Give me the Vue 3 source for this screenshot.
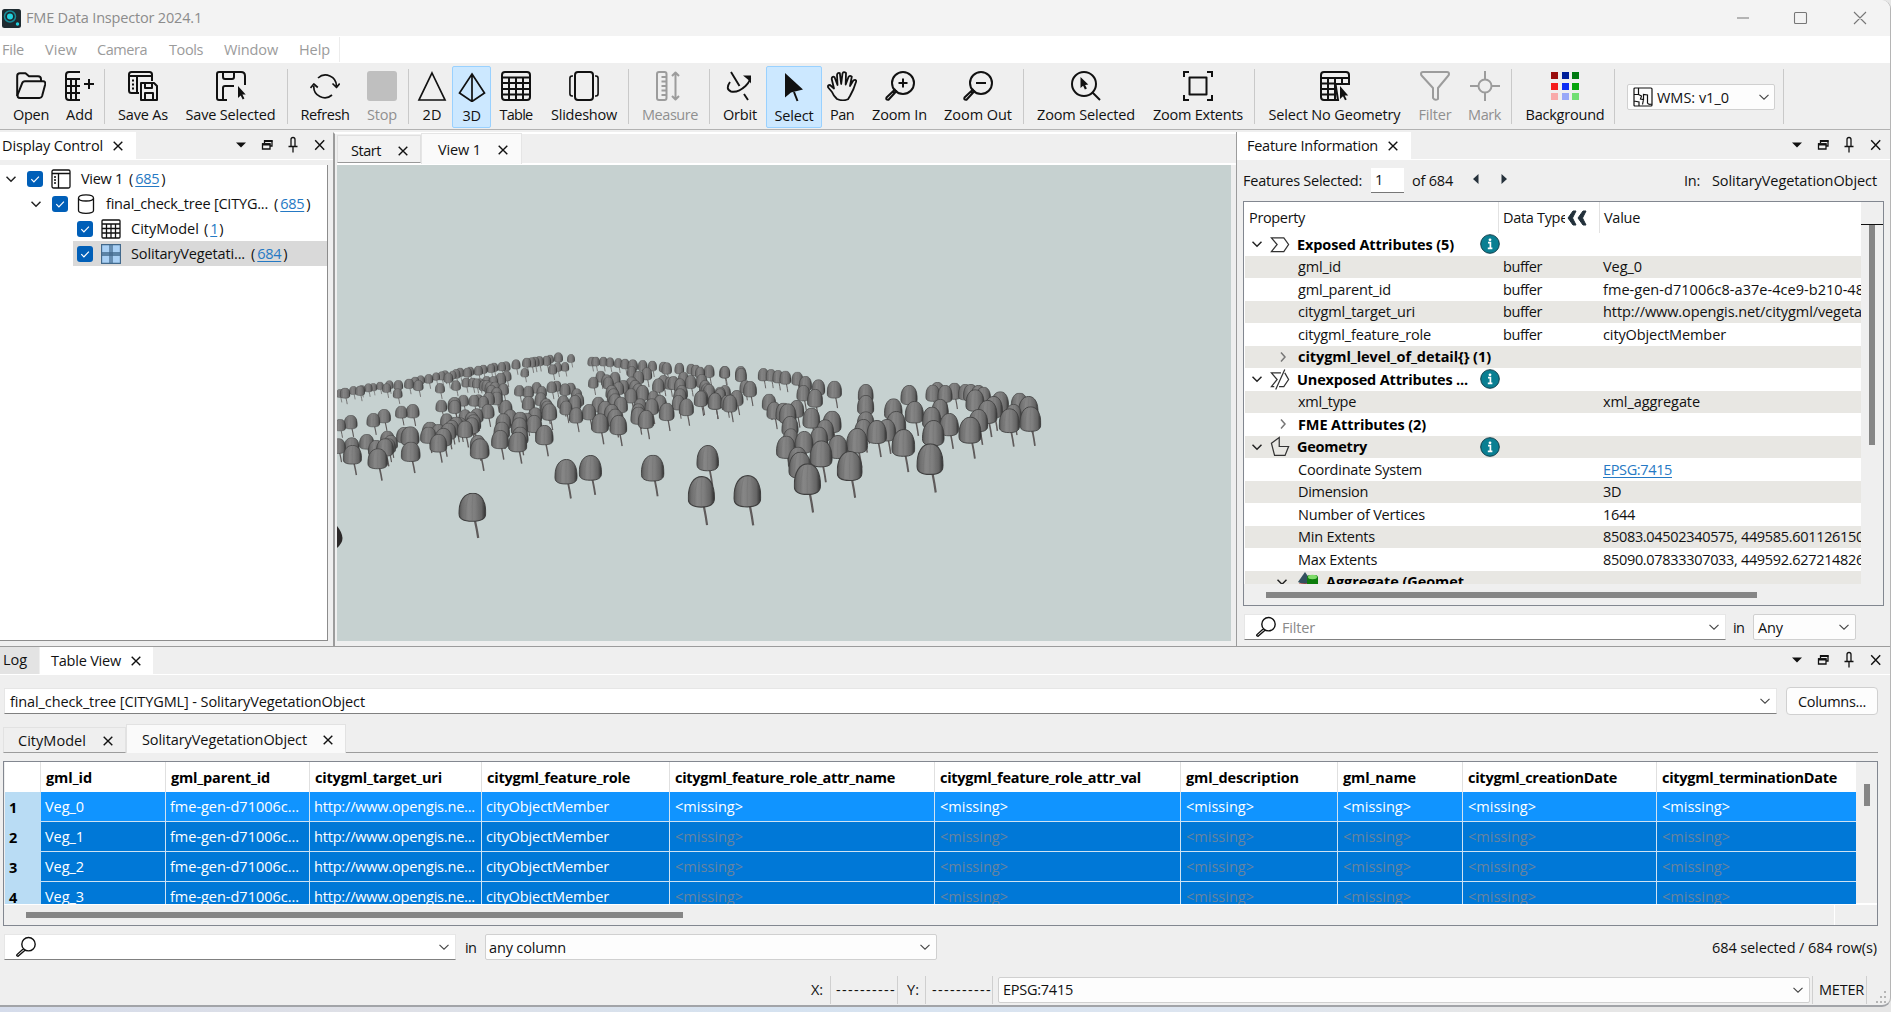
<script setup>
import { h } from 'vue'

// Tightens or loosens the tracking of a label so that it fills its slot.
const vFit = {
  mounted(el, { value }) {
    if (!value) return
    const width = el.getBoundingClientRect().width
    el.style.letterSpacing = (value - width) / el.textContent.length + 'px'
  }
}

const glyphs = {
  open: '<path d="M1.2 25V5q0-2.7 2.7-2.7h5.6L13 5.2h9q3 0 3 3v2"/><path d="M4 27h19.5q2 0 2.6-2l3.1-11.600q.5-3.200-2.200-3.200H9q-2.200 0-2.800 2L1.700 23.500Q1 27 4 27z"/>',
  add: '<path d="M15 1H4Q1 1 1 4v22q0 3 3 3h11M1 8h14M1 15h14M1 22h14M6 8v21M11 8v21"/><path d="M19 13h10M24 8v10"/>',
  saveAs: '<path d="M11 22H3.500Q1 22 1 19.500V3.500Q1 1 3.500 1h18Q24 1 24 3.500V10M1 5h23M9 5v17"/><path d="M4 9.500h2M4 13.500h2M4 17.500h2" /><path d="M13 12h13l3 3v14H13zM17 12v5h7v-5M17 29v-7h8v7"/>',
  saveSel: '<path d="M11 29H3q-2 0-2-2V3q0-2 2-2h22q4 0 4 4v9M7 1v5q0 2 2 2h7q2 0 2-2V1M7 29V17q0-2 2-2h9"/><path class="solid" d="M22 15v12l2.700-2.500 2 4 1.700-.900-2-4h3.300z"/>',
  refresh: '<path d="M8 7A11 11 0 0 1 26.500 15M22 24A11 11 0 0 1 3.800 15M22.500 12.500l4 4 3.200-4M.500 17l3.300-4 4 3.500" stroke-width="1.700"/>',
  stop: '<rect class="grey" x="0" y="0" width="30" height="30" rx="3"/>',
  d2: '<path d="M15 2 28 29H2z" stroke-width="1.700" stroke-linejoin="miter"/>',
  d3: '<path d="M15 2 27.500 21 15 29.500 2.500 21zM15 2v27.500" stroke-width="1.700" stroke-linejoin="miter"/>',
  table: '<path d="M4 1h22q3 0 3 3v22q0 3-3 3H4q-3 0-3-3V4q0-3 3-3zM1 6.500h28M1 12h28M1 18h28M1 23.500h28M8 6.500V29M15 6.500V29M22 6.500V29"/>',
  slide: '<rect x="6" y="1" width="18" height="28" rx="3"/><path d="M4 5H3Q.900 5 .900 7.500v15Q.900 25 3 25h1M26 5h1q2.100 0 2.100 2.500v15Q29.100 25 27 25h-1" stroke-width="1.600"/>',
  measure: '<rect x="2" y="1" width="9.500" height="28" rx="2"/><path d="M6.500 6H11M6.500 10.500H11M6.500 15H11M6.500 19.500H11M6.500 24H11M20.500 1.500v27M17 5l3.500-3.500L24 5M17 25l3.500 3.500L24 25"/>',
  orbit: '<path d="M6 1l8.500 14M19 23l4 6M5 11Q0 18 6 20.500Q13 22 20.500 15Q26 9.500 25 5.500" stroke-width="1.900"/><path class="solid" d="M18 4.500h8v8L23.500 9z"/>',
  select: '<path class="solid" d="M6 1v24.500l6-5 12-3z"/><path d="M15 20l3.500 9"/>',
  pan: '<path d="M10 28Q6 24 5 21L1.200 16.500Q.300 14 3 14l4 3.500L4.700 8Q4.800 5 7.500 6l3 8L10 4Q10.300 1.300 12.800 2l1.400 11L15.500 2.500Q16.500 0 19 2l-.300 11.500L21.500 6q1.300-2 3.300-.300L23 15l3.300-5.500q2.300-1.500 3 .500L26.500 18 23 25l-2 3.200Q16 30.500 10 28z" stroke-width="1.800"/>',
  zoomIn: '<circle cx="18" cy="12" r="11"/><path d="M18 7.500v9M13.500 12h9M10.500 18 1.500 26.500Q.500 29 3.500 28.700L12 19.500M8 20.500l1.500 1.500" />',
  zoomOut: '<circle cx="18" cy="12" r="11"/><path d="M13 12h10M10.500 18 1.500 26.500Q.500 29 3.500 28.700L12 19.500M8 20.500l1.500 1.500" />',
  zoomSel: '<circle cx="13" cy="13" r="12"/><path d="M21.500 21.500 29 29"/><path class="solid" d="M9.500 6v11l2.600-2.200 1.800 3.700 2-1-1.800-3.600 3.200-.300z"/>',
  zoomExt: '<path d="M1 6V1h5M24 1h5v5M1 24v5h5M24 29h5v-5" stroke-linejoin="miter"/><rect x="6.500" y="6.500" width="17" height="17"/>',
  noGeom: '<path d="M18 29H4q-3 0-3-3V4q0-3 3-3h22q3 0 3 3v9H15.500zM1 7h28M1 12.500h14M1 18h14M1 23.500h14M8 7v22M15 7v22M22 7v6" stroke-linejoin="miter"/><path class="solid" d="M20 15v13l3-2.700 2 4 1.700-.900-2-4h3.500z"/>',
  filter: '<path d="M1 3q0-2 2-2h24q2 0 2 2 0 1-1 2L18 17v11q-3 2-5-1V17L2 5Q1 4 1 3z"/>',
  mark: '<circle cx="15" cy="15" r="6.500"/><path d="M15 0v8.500M15 21.500V30M0 15h8.500M21.500 15H30"/>',
  bg: '<g stroke="none"><path fill="#990d0d" d="M1 1h7v7H1z"/><path fill="#00209a" d="M12 1h7v7h-7z"/><path fill="#007a12" d="M22 1h7v7h-7z"/><path fill="#f41c1c" d="M1 12h7v7H1z"/><path fill="#0d2df4" d="M12 12h7v7h-7z"/><path fill="#06a40c" d="M22 12h7v7h-7z"/><path fill="#f8aaaa" d="M1 22h7v7H1z"/><path fill="#98a8f8" d="M12 22h7v7h-7z"/><path fill="#72df74" d="M22 22h7v7h-7z"/></g>'
}

const tools = [
  { l: 'Open', i: 'open', g: 7, w: 48, f: 36 },
  { l: 'Add', i: 'add', g: 0, w: 49, f: 27 },
  { sep: 1, g: 0 },
  { l: 'Save As', i: 'saveAs', g: 0, w: 76, f: 50 },
  { l: 'Save Selected', i: 'saveSel', g: 0, w: 99, f: 90 },
  { sep: 1, g: 7 },
  { l: 'Refresh', i: 'refresh', g: 0, w: 74, f: 49 },
  { l: 'Stop', i: 'stop', g: 0, w: 40, f: 30, off: 1 },
  { sep: 1, g: 6 },
  { l: '2D', i: 'd2', g: 3, w: 40, f: 19 },
  { l: '3D', i: 'd3', g: 0, w: 39, f: 18, on: 1 },
  { l: 'Table', i: 'table', g: 3, w: 44, f: 33 },
  { l: 'Slideshow', i: 'slide', g: 7, w: 78, f: 66 },
  { sep: 1, g: 5 },
  { l: 'Measure', i: 'measure', g: 6, w: 70, f: 56, off: 1 },
  { sep: 1, g: 4 },
  { l: 'Orbit', i: 'orbit', g: 5, w: 50, f: 34 },
  { l: 'Select', i: 'select', g: 1, w: 56, f: 39, on: 1 },
  { l: 'Pan', i: 'pan', g: 0, w: 40, f: 24 },
  { l: 'Zoom In', i: 'zoomIn', g: 4, w: 67, f: 55 },
  { l: 'Zoom Out', i: 'zoomOut', g: 7, w: 76, f: 68 },
  { sep: 1, g: 7 },
  { l: 'Zoom Selected', i: 'zoomSel', g: 7, w: 110, f: 98 },
  { l: 'Zoom Extents', i: 'zoomExt', g: 6, w: 102, f: 90 },
  { sep: 1, g: 5 },
  { l: 'Select No Geometry', i: 'noGeom', g: 4, w: 151, f: 132 },
  { l: 'Filter', i: 'filter', g: 5, w: 40, f: 33, off: 1 },
  { l: 'Mark', i: 'mark', g: 8, w: 43, f: 33, off: 1 },
  { sep: 1, g: 5 },
  { l: 'Background', i: 'bg', g: 12, w: 82, f: 79 },
  { sep: 1, g: 8 }
]

const menus = [['File', 22, 21], ['View', 32, 20], ['Camera', 50, 22], ['Tools', 34, 21], ['Window', 54, 21], ['Help', 31, 0]]

const Chevron = (p) => h('svg', { class: 'chev', width: 10, height: 10, viewBox: '0 0 10 10' },
  [h('path', { d: p.right ? 'M3 .5l4 4.500-4 4.500' : 'M.5 2.800l4.500 4.400 4.500-4.400', fill: 'none', stroke: p.right ? '#777' : (p.color || '#222'), 'stroke-width': p.thin ? 1.1 : 1.5 })])
Chevron.props = { right: Boolean, thin: Boolean, color: String }

const Cross = () => h('svg', { width: 10, height: 10, viewBox: '0 0 10 10' },
  [h('path', { d: 'M.7.700l8.600 8.600M9.300.700.700 9.300', fill: 'none', stroke: '#111', 'stroke-width': 1.4 })])

const DockTools = () => h('svg', { class: 'docktools', width: 92, height: 18, viewBox: '0 0 92 18' }, [
  h('path', { d: 'M2 6.500h10L7 11.500z', fill: '#111' }),
  h('path', { d: 'M30.500 7V5h7.500v5h-2M28.500 8h7.500v5h-7.500z', fill: 'none', stroke: '#111', 'stroke-width': 1.3 }),
  h('path', { d: 'M28 8.400h8.500M30 5h8.500', fill: 'none', stroke: '#111', 'stroke-width': 2.2 }),
  h('path', { d: 'M57 10.500V3.500q0-2 2-2t2 2v7M54.500 10.500h9M59 10.500v6', fill: 'none', stroke: '#111', 'stroke-width': 1.3 }),
  h('path', { d: 'M81.200 4.200l9 9.600M90.200 4.200l-9 9.600', fill: 'none', stroke: '#111', 'stroke-width': 1.4 })
])

const Lens = () => h('svg', { width: 22, height: 22, viewBox: '0 0 22 22' },
  [h('path', { d: 'M13.500 1.500a6.700 6.700 0 1 1 0 13.400 6.700 6.700 0 1 1 0-13.400M8.700 12.600l-6.700 6q-.9 1.500 1 1.600l7-6', fill: 'none', stroke: '#111', 'stroke-width': 1.4 })])

const layers = [
  { pad: 6, caret: 1, icon: 'view', name: 'View 1', f: 42, gap: 6, n: '685', nf: 24 },
  { pad: 31, caret: 1, icon: 'db', name: 'final_check_tree [CITYG...', f: 162, gap: 6, n: '685', nf: 24 },
  { pad: 72, icon: 'tbl', name: 'CityModel', f: 68, gap: 5, n: '1', nf: 7 },
  { pad: 72, icon: 'veg', name: 'SolitaryVegetati...', f: 114, gap: 6, n: '684', nf: 24, sel: 1 }
]
const layerGlyphs = {
  view: '<rect x="1" y="1" width="18" height="18" rx="1.500"/><path d="M1 4.500h18M7.500 4.500V19M3 8h2M3 11h2M3 14h2"/>',
  db: '<path d="M2.500 4v12.500Q2.500 19.300 10 19.300t7.500-2.800V4Q17.500.800 10 .800T2.500 4q0 3 7.500 3t7.500-3"/>',
  tbl: '<path d="M2 1h16q1 0 1 1v16q0 1-1 1H2q-1 0-1-1V2q0-1 1-1zM1 5h18M1 9.500h18M1 14h18M5.500 5v14M10 5v14M14.500 5v14"/>',
  veg: '<path d="M.5.500h19v19H.5zM9 .5v19M11 .5v19M.5 9h19M.5 11h19" fill="#a9d0f5" stroke="#42698c"/>'
}

const props = [
  { k: 'Exposed Attributes (5)', f: 157, head: 'exp', info: 1 },
  { k: 'gml_id', f: 43, t: 'buffer', v: 'Veg_0', vf: 39 },
  { k: 'gml_parent_id', f: 93, t: 'buffer', v: 'fme-gen-d71006c8-a37e-4ce9-b210-48', vf: 261 },
  { k: 'citygml_target_uri', f: 117, t: 'buffer', v: 'http://www.opengis.net/citygml/vegeta', vf: 259 },
  { k: 'citygml_feature_role', f: 133, t: 'buffer', v: 'cityObjectMember', vf: 123 },
  { k: 'citygml_level_of_detail{} (1)', f: 193, sub: 1 },
  { k: 'Unexposed Attributes ...', f: 171, head: 'unexp', info: 1 },
  { k: 'xml_type', f: 58, v: 'xml_aggregate', vf: 97 },
  { k: 'FME Attributes (2)', f: 128, sub: 1 },
  { k: 'Geometry', f: 70, head: 'geom', info: 1 },
  { k: 'Coordinate System', f: 124, v: 'EPSG:7415', vf: 69, link: 1 },
  { k: 'Dimension', f: 70, v: '3D', vf: 18 },
  { k: 'Number of Vertices', f: 127, v: '1644', vf: 32 },
  { k: 'Min Extents', f: 77, v: '85083.04502340575, 449585.601126150', vf: 261 },
  { k: 'Max Extents', f: 79, v: '85090.07833307033, 449592.627214826', vf: 261 },
  { k: 'Aggregate (Geomet', f: 138, agg: 1 }
]
const headGlyphs = {
  exp: '<path d="M1 4h13l5 7-5 7.500H1l6-7.500z"/>',
  unexp: '<path d="M11 4H1l6 7-6 7.500h3M15 4l4 7-5 7.500H9M15 .5 5.500 21.500"/>',
  geom: '<path d="M9.200 1.500 1 7.500l3.300 12.800h11L19 11H9.200z"/>'
}

const columns = [
  { n: 'gml_id', w: 125, f: 46 },
  { n: 'gml_parent_id', w: 144, f: 99 },
  { n: 'citygml_target_uri', w: 172, f: 127 },
  { n: 'citygml_feature_role', w: 188, f: 143 },
  { n: 'citygml_feature_role_attr_name', w: 265, f: 220 },
  { n: 'citygml_feature_role_attr_val', w: 246, f: 201 },
  { n: 'gml_description', w: 157, f: 113 },
  { n: 'gml_name', w: 125, f: 73 },
  { n: 'citygml_creationDate', w: 194, f: 149 },
  { n: 'citygml_terminationDate', w: 199, f: 175 }
]
const M = ['<missing>', 68]
const rows = [0, 1, 2, 3].map((i) => [
  ['Veg_' + i, 39], ['fme-gen-d71006c...', 129], ['http://www.opengis.ne...', 161], ['cityObjectMember', 123], M, M, M, M, M, M
])

// Tree positions as [centre x, top y, crown width], in thirds of a pixel of the two halves of the scene.
const west = [
  [30,177,26],[45,173,32],[70,168,26],[90,167,30],[95,165,24],[115,160,26],[130,159,24],[150,155,24],[170,160,28],[178,151,26],[205,150,30],[203,175,30],[237,146,30],[255,140,26],[265,150,32],[272,136,26],[296,132,28],[318,127,24],[335,124,26],[345,121,26],[355,128,30],[368,122,24],[378,117,28],[390,113,26],[412,113,28],[420,110,26],[445,107,28],[460,104,26],[483,101,26],[492,98,26],[515,96,26],[528,94,28],[558,88,28],[590,83,28],[605,82,28],[615,80,28],[628,78,28],[650,77,28],[660,74,24],[685,67,28],[723,72,24],
  [584,114,26],[668,103,28],[683,97,26],[705,96,26],[330,159,30],[378,151,30],[408,143,28],[428,143,28],[450,145,28],[470,138,30],[490,138,30],[512,128,34],[530,122,30],
  [440,145,28],[462,150,32],[470,150,32],[480,155,34],[495,155,34],[520,160,34],[484,165,34],[500,172,36],[568,165,32],[595,167,34],[620,156,32],[635,168,32],[665,154,32],[680,152,30],[705,160,34],[722,158,32],[740,175,34],
  [334,209,36],[373,201,42],[374,210,40],[400,194,34],[432,194,34],[445,193,34],[460,198,34],[476,186,38],[500,185,38],[527,210,42],[473,222,42],[595,198,40],[632,187,38],[648,205,40],[652,212,42],[658,220,48],[700,196,38],[708,212,40],[735,195,40],[745,190,36],
  [30,267,36],[62,255,42],[130,249,42],[162,237,42],[214,227,38],[248,222,42],
  [110,312,46],[172,302,44],[182,315,44],[175,325,46],[25,325,46],[65,322,48],[67,345,58],[138,330,48],[165,325,54],[143,355,62],[222,291,48],[240,289,58],[242,335,60],
  [300,275,50],[295,290,50],[325,282,44],[350,250,40],[378,260,48],[355,278,50],[340,294,54],[325,312,54],[365,270,46],[390,262,46],[405,238,40],[425,245,44],[440,235,42],[430,253,48],[425,262,48],[405,272,50],[443,315,48],[449,325,60],
  [520,250,48],[540,238,44],[515,275,50],[510,300,54],[570,245,46],[568,262,52],[570,290,52],[563,305,58],[590,248,42],[615,232,44],[612,255,50],[643,285,56],
  [738,232,44],[777,222,44],[805,200,42],[825,212,46],[845,222,48],[855,236,50],[865,255,54],[810,250,54],
  [872,200,44],[855,190,42],[850,175,40],[845,165,38],[865,155,36],[880,150,36],[903,175,40],[790,140,32],[830,133,34],[812,122,32],[855,125,34],[835,140,34],
  [785,80,26],[797,80,26],[820,80,26],[840,82,26],[865,84,26],[885,86,28],[908,88,32],[938,90,30],[967,92,28],[1000,95,28],[1010,97,32],[1048,98,30],[1083,101,28],[1097,104,30],[1110,110,30],[1137,104,34],[1183,108,32],
  [905,108,30],[950,112,34],[925,122,36],[905,140,38],[915,150,38],[925,160,40],[937,165,42],[970,182,38],[985,145,38],[1000,135,36],[1020,140,34],[1030,138,36],[1060,125,34],[1050,145,36],[1082,135,36],[1115,132,36],[1125,150,36],[1055,165,38],[1050,175,42],[1045,195,40],[1069,205,46],[965,205,44],[990,195,42],[1010,218,48],[930,205,42],[925,220,44],[925,230,48],[948,240,50],[1137,162,38],[1112,182,42],[1155,188,44],[1170,170,36],[1190,195,38],
  [427,488,84],[708,387,70],[781,375,70],[968,374,71],[1133,345,68],[1114,438,82]
]
const east = [
  [75,108,32],[122,108,34],[123,114,36],[135,150,34],[150,153,42],[75,165,36],[60,175,36],[20,160,38],[110,180,42],[45,188,44],[90,194,46],[5,180,42],
  [190,114,34],[213,117,32],[234,120,34],[256,122,36],[292,125,36],[316,138,40],[355,148,42],[403,152,46],[310,165,42],[345,177,48],
  [207,191,44],[290,210,46],[222,215,46],[250,218,48],[263,220,54],[334,233,54],[270,258,52],[396,242,58],[375,268,56],[357,290,56],[272,295,48],[312,303,58],[258,317,60],[413,315,62],[363,331,70],[293,350,60],[300,365,70],[322,400,82],
  [497,162,48],[497,195,52],[497,244,54],[490,267,56],[471,294,66],[449,363,78],[560,267,58],[530,270,62],[580,205,56],[588,243,62],[610,297,72],[627,165,52],[643,213,58],[695,230,58],[720,207,52],[698,164,44],[712,156,46],[735,165,46],[763,158,44],[795,162,42],[812,162,46],[835,165,48],[825,178,58],[850,170,46],[747,249,60],[700,270,68],[690,340,82],[810,260,70],[835,237,60],[862,210,62],[880,198,58],[900,184,54],[958,188,52],[985,198,62],[940,222,52],[928,235,64],[991,229,66],[142,435,84]
]
// Crowns look squatter toward the left of the view and taller toward the right.
const stretch = (x) => 1.58 + 0.24 * Math.min(1, Math.max(0, (x - 400) / 300))
const scene = [
  ...west.map(([x, y, w]) => [330 + x / 3, 330 + y / 3, w / 3]),
  ...east.map(([x, y, w]) => [700 + x / 3, 330 + y / 3, w / 3])
].map(([x, y, w]) => ({ x: x - w / 2 - 337, y: y - 165, w, hgt: w * stretch(x), foot: y + w }))
  .sort((a, b) => a.foot - b.foot)
</script>

<template>
  <div class="desk">
    <div class="win">
      <header class="title">
        <svg width="19" height="19" viewBox="0 0 19 19"><rect width="19" height="19" rx="2.500" fill="#1e2a30" /><circle cx="8" cy="7.500" r="5.500" fill="none" stroke="#178c99" stroke-width="1.500" /><circle cx="8" cy="7.500" r="3" fill="#22d3e0" /><circle cx="15.500" cy="15" r="1.700" fill="#22d3e0" /></svg>
        <span v-fit="176" class="t">FME Data Inspector 2024.1</span>
        <svg class="caption" width="134" height="16" viewBox="0 0 134 16"><path d="M1 8h12M59.500 2.500h10q1 0 1 1v9q0 1-1 1h-10q-1 0-1-1v-9q0-1 1-1zM118 2l12 12M130 2l-12 12" fill="none" stroke="#777" stroke-width="1.100" /></svg>
      </header>

      <nav class="menu">
        <span v-for="m in menus" :key="m[0]" v-fit="m[1]" class="t" :style="{ marginRight: m[2] + 'px' }">{{ m[0] }}</span>
      </nav>

      <div class="toolbar">
        <template v-for="(b, n) in tools" :key="n">
          <i v-if="b.sep" class="sep" :style="{ marginLeft: b.g + 'px' }"></i>
          <div v-else class="tool" :class="{ on: b.on, off: b.off }" :style="{ marginLeft: b.g + 'px', width: b.w + 'px' }">
            <svg width="30" height="30" viewBox="0 0 30 30" v-html="glyphs[b.i]"></svg>
            <span v-fit="b.f" class="t">{{ b.l }}</span>
          </div>
        </template>
        <div class="combo wms">
          <svg width="20" height="20" viewBox="0 0 20 20"><path d="M2 1h16q1 0 1 1v16q0 1-1 1H2q-1 0-1-1V2q0-1 1-1zM5.500 1v6.500H1M5.500 7.500l3 1.500-1 3 3 .5v-5l4 .5v8q1 2 4.500 1M1 14l5 1v4M10.500 12.500l-1 5" fill="none" stroke="#111" stroke-width="1.200" /></svg>
          <span v-fit="72" class="t">WMS: v1_0</span>
          <Chevron thin color="#444" />
        </div>
        <i class="sep wsep"></i>
      </div>

      <main class="main">
        <section class="left">
          <div class="docktabs">
            <div class="docktab dc"><span v-fit="101" class="t">Display Control</span><Cross /></div>
            <DockTools />
          </div>
          <div class="tree">
            <div v-for="l in layers" :key="l.name" class="layer" :class="{ sel: l.sel }" :style="{ '--pad': l.pad + 'px' }">
              <Chevron v-if="l.caret" class="caret" />
              <svg class="check" width="16" height="16" viewBox="0 0 16 16"><rect width="16" height="16" rx="3" fill="#005fb8" /><path d="M4.300 8.200l2.600 2.600 5-5.200" fill="none" stroke="#fff" stroke-width="1.200" /></svg>
              <svg class="lic" width="20" height="20" viewBox="0 0 20 20" v-html="layerGlyphs[l.icon]"></svg>
              <span v-fit="l.f" class="t">{{ l.name }}</span><span class="t par" :style="{ marginLeft: l.gap + 'px' }">(</span><a v-fit="l.nf" class="t">{{ l.n }}</a><span class="t">)</span>
            </div>
          </div>
        </section>

        <section class="center">
          <div class="viewtabs">
            <div class="vtab start"><span v-fit="30" class="t">Start</span><Cross /></div>
            <div class="vtab cur"><span v-fit="43" class="t">View 1</span><Cross /></div>
          </div>
          <svg class="scene" width="894" height="476" viewBox="0 0 894 476">
            <defs>
              <linearGradient id="crown" x1="0" x2="1"><stop offset="0" stop-color="#505050" /><stop offset=".12" stop-color="#6e6e6e" /><stop offset=".35" stop-color="#868686" /><stop offset=".6" stop-color="#7e7e7e" /><stop offset=".84" stop-color="#656565" /><stop offset="1" stop-color="#2e2e2e" /></linearGradient>
              <symbol id="plant" viewBox="0 0 100 176" preserveAspectRatio="none">
                <path d="M59 106l7 36 5 32" fill="none" stroke="#5f5b5b" stroke-width="8" />
                <path d="M2 80C2 30 22 2 52 2S98 34 98 78C98 100 84 110 50 110S2 100 2 80z" fill="url(#crown)" stroke="#404040" stroke-width="4" />
                <path d="M38 8Q24 45 26 104M52 4Q48 50 50 106M64 8Q76 50 74 104" fill="none" stroke="#707070" stroke-width="1.500" />
              </symbol>
            </defs>
            <use v-for="(s, n) in scene" :key="n" href="#plant" :x="s.x" :y="s.y" :width="s.w" :height="s.hgt" />
            <path d="M0 361q5 6 5.500 12 0 5-5.500 10z" fill="#2c2929" />
          </svg>
        </section>

        <section class="right">
          <div class="docktabs">
            <div class="docktab fi"><span v-fit="131" class="t">Feature Information</span><Cross /></div>
            <DockTools />
          </div>
          <div class="selrow">
            <span v-fit="119" class="t">Features Selected:</span>
            <div class="num t">1</div>
            <span v-fit="41" class="t">of 684</span>
            <svg class="arrows" width="34" height="10" viewBox="0 0 34 10"><path d="M5.500 0v10L0 5zM28.500 0v10l5.500-5z" fill="#26323c" /></svg>
            <span v-fit="16" class="t in">In:</span>
            <span v-fit="165" class="t">SolitaryVegetationObject</span>
          </div>
          <div class="ptable">
            <div class="phead">
              <div class="c1"><span v-fit="56" class="t">Property</span></div>
              <div class="c2"><div class="clip"><span v-fit="65" class="t">Data Type</span></div><svg width="20" height="16" viewBox="0 0 20 16"><path d="M6 1h3L5.500 8 9 15H6L1 8zM16 1h3l-3.500 7 3.500 7h-3l-5-7z" fill="#22303a" stroke="#22303a" /></svg></div>
              <div class="c3"><span v-fit="36" class="t">Value</span></div>
            </div>
            <div class="pbody">
              <div v-for="p in props" :key="p.k" class="prow" :class="{ head: p.head, sub: p.sub, agg: p.agg }">
                <div class="c1">
                  <Chevron v-if="p.head || p.agg" /><Chevron v-if="p.sub" right />
                  <svg v-if="p.head" class="hic" width="20" height="21" viewBox="0 0 20 22" v-html="headGlyphs[p.head]"></svg>
                  <svg v-if="p.agg" class="aic" width="20" height="20" viewBox="0 0 20 20"><path d="M7 0l7 10q-7 4-14 0z" fill="#33505f" /><path d="M1 11.500h8V20H1z" fill="#c33a33" /><rect x="9" y="3" width="11" height="14" rx="3" fill="#0d7d0d" /><ellipse cx="14.500" cy="5" rx="4.500" ry="2.200" fill="#7fdc6a" /></svg>
                  <span v-fit="p.f" class="t">{{ p.k }}</span>
                  <svg v-if="p.info" class="info" width="20" height="20" viewBox="0 0 20 20"><circle cx="10" cy="10" r="9.300" fill="#0a7f92" stroke="#123f4c" /><circle cx="10" cy="5.800" r="1.400" fill="#fff" /><path d="M8 8.700h2.400v5.600M7.800 14.300h4.600" fill="none" stroke="#fff" stroke-width="1.700" /></svg>
                </div>
                <div class="c2"><span v-if="p.t" v-fit="39" class="t">{{ p.t }}</span></div>
                <div class="c3"><span v-if="p.v" v-fit="p.vf" class="t" :class="{ link: p.link }">{{ p.v }}</span></div>
              </div>
            </div>
            <div class="vbar"><i></i></div>
            <div class="hbar"><i></i></div>
          </div>
          <div class="filterrow">
            <div class="edit"><Lens /><span v-fit="33" class="t ph">Filter</span><Chevron thin color="#444" /></div>
            <span v-fit="11" class="t">in</span>
            <div class="combo any"><span v-fit="25" class="t">Any</span><Chevron thin color="#444" /></div>
          </div>
        </section>
      </main>

      <section class="bottom">
        <div class="docktabs">
          <div class="logtab"><span v-fit="24" class="t">Log</span></div>
          <div class="docktab tv"><span v-fit="70" class="t">Table View</span><Cross /></div>
          <DockTools />
        </div>
        <div class="pickrow">
          <div class="edit"><span v-fit="355" class="t">final_check_tree [CITYGML] - SolitaryVegetationObject</span><Chevron thin color="#444" /></div>
          <div class="btn"><span v-fit="68" class="t">Columns...</span></div>
        </div>
        <div class="ttabs">
          <div class="tt one"><span v-fit="68" class="t">CityModel</span><Cross /></div>
          <div class="tt two"><span v-fit="165" class="t">SolitaryVegetationObject</span><Cross /></div>
          <div class="rest"></div>
        </div>
        <div class="grid">
          <div class="gmain">
            <div class="gr gh">
              <div class="rn"></div>
              <div v-for="c in columns" :key="c.n" class="gc" :style="{ width: c.w + 'px' }"><span v-fit="c.f" class="t">{{ c.n }}</span></div>
            </div>
            <div v-for="(r, i) in rows" :key="i" class="gr" :class="{ first: !i }">
              <div class="rn t">{{ i + 1 }}</div>
              <div v-for="(c, j) in r" :key="j" class="gc" :class="{ miss: j > 3 }" :style="{ width: columns[j].w + 'px' }"><span v-fit="c[1]" class="t">{{ c[0] }}</span></div>
            </div>
          </div>
          <div class="gv"><i></i></div>
          <div class="ghs"><i></i><b></b></div>
        </div>
        <div class="searchrow">
          <div class="edit"><Lens /><Chevron thin color="#444" /></div>
          <span v-fit="11" class="t">in</span>
          <div class="combo anyc"><span v-fit="77" class="t">any column</span><Chevron thin color="#444" /></div>
          <span v-fit="165" class="t count">684 selected / 684 row(s)</span>
        </div>
      </section>

      <footer class="status">
        <div class="st sx"><span v-fit="12" class="t">X:</span></div>
        <div class="st sd"><span v-fit="60" class="t">----------</span></div>
        <div class="st sy"><span v-fit="12" class="t">Y:</span></div>
        <div class="st sd2"><span v-fit="60" class="t">----------</span></div>
        <div class="combo crs"><span v-fit="70" class="t">EPSG:7415</span><Chevron thin color="#444" /></div>
        <div class="st unit"><span v-fit="45" class="t">METER</span></div>
        <svg class="grip" width="12" height="14" viewBox="0 0 12 14"><path d="M9 1h2v2H9zM9 6h2v2H9zM5 6h2v2H5zM9 11h2v2H9zM5 11h2v2H5zM1 11h2v2H1z" fill="#b5b5b5" /></svg>
      </footer>
    </div>
  </div>
</template>

<style>
body { overflow: hidden; }
svg { flex: none; display: block; }
</style>

<style scoped>
* { box-sizing: border-box; }
.desk { width: 1891px; height: 1012px; background: linear-gradient(90deg, #d5dceb, #dfe0e6 20%, #d5e2f0 40%, #dde5f0 65%, #e6e6e6 80%); font: 14.5px/20px "Open Sans", "Noto Sans", sans-serif; color: #111; overflow: hidden; }
.win { width: 1891px; height: 1007px; background: #efefef; border-right: 1px solid #b5b5b5; border-bottom: 2px solid #a2a4a8; border-radius: 0 9px 9px 0; overflow: hidden; display: flex; flex-direction: column; }
.t { white-space: pre; flex: none; }
span.t, a.t { display: inline-block; }

.title { height: 36px; flex: none; background: #f3f3f3; display: flex; align-items: center; padding: 0 20px 0 2px; color: #8c8c8c; }
.title .t { margin-left: 5px; }
.caption { margin-left: auto; }
.menu { height: 27px; flex: none; background: #fff; display: flex; align-items: center; padding-left: 2px; color: #9b9b9b; }
.menu::after { content: ""; width: 1px; height: 25px; margin-left: 9px; background: #ececec; }

.toolbar { height: 67px; flex: none; border-bottom: 1px solid #b2b2b2; display: flex; padding-top: 3px; }
.sep { width: 1px; height: 55px; margin-top: 3px; background: #c9c9c9; flex: none; }
.tool { flex: none; height: 62px; display: flex; flex-direction: column; align-items: center; padding-top: 5px; }
.tool svg { fill: none; stroke: #111; stroke-width: 2; stroke-linejoin: round; }
.tool :deep(.solid) { fill: #111; stroke: none; }
.tool :deep(.grey) { fill: #bfbfbf; stroke: none; }
.tool .t { margin-top: 4px; }
.tool.off { color: #8f8f8f; }
.tool.off svg { stroke: #9c9c9c; }
.tool.on { background: #cce8ff; border: 1px solid #99d1ff; border-radius: 2px; }
.combo { background: #fdfdfd; border: 1px solid #d0d0d0; border-radius: 2px; display: flex; align-items: center; height: 26px; flex: none; }
.combo .t, .edit .t { padding-top: 1px; }
.combo .chev, .edit .chev { margin-left: auto; }
.wms { width: 148px; margin: 18px 0 0 12px; padding: 0 5px 0 5px; }
.wms .t { margin-left: 4px; }
.wsep { margin-left: 8px; }

.main { height: 516px; flex: none; display: flex; padding-top: 2px; }
.docktabs { height: 28px; flex: none; display: flex; border-bottom: 1px solid #fff; }
.docktab { background: #fff; display: flex; align-items: center; height: 27px; flex: none; }
.docktabs .docktools { margin: 4px 0 0 auto; }
.left { width: 333px; flex: none; display: flex; flex-direction: column; }
.dc { width: 136px; padding-left: 2px; }
.docktab svg { margin-left: 10px; }
.left .docktools { margin-right: 7px; }
.tree { width: 328px; height: 476px; margin-top: 5px; background: #fff; border: solid #8c8c8c; border-width: 0 1px 1px 0; padding-top: 1px; }
.layer { height: 25px; display: flex; align-items: center; padding-left: var(--pad); }
.layer .t { padding-top: 1px; }
.layer.sel { background: linear-gradient(90deg, transparent 73px, #d9d9d9 73px); }
.caret { margin-right: 11px; }
.layer:not(:has(.caret)) .check { margin-left: 5px; }
.lic { fill: none; stroke: #111; stroke-width: 1.3; margin: 0 10px 0 8px; }
.layer a { color: #2579c4; text-decoration: underline; text-underline-offset: 2px; margin: 0 2px 0 2px; }

.center { width: 903px; flex: none; border-left: 2px solid #9c9c9c; border-top: 2px solid #fff; display: flex; flex-direction: column; padding-left: 2px; height: 514px; }
.viewtabs { height: 31px; display: flex; align-items: flex-end; border-bottom: 2px solid #fff; flex: none; }
.vtab { display: flex; align-items: center; justify-content: space-between; }
.start { width: 84px; height: 28px; border: 1px solid #e0e0e0; border-bottom-color: #999; background: #f2f2f2; padding: 3px 12px 0 13px; }
.cur { width: 101px; height: 31px; background: #fafafa; border: 1px solid #e5e5e5; border-bottom: 0; padding: 2px 13px 0 16px; margin-bottom: -1px; }
.scene { background: #c6d1d0; }

.right { flex: 1; border-left: 1px solid #9c9c9c; height: 514px; }
.fi { width: 174px; padding-left: 10px; }
.right .docktools { margin-right: 8px; }
.selrow { height: 41px; display: flex; align-items: center; padding: 0 13px 0 6px; }
.num { width: 33px; height: 25px; line-height: 24px; background: #fff; border-bottom: 1px solid #777; margin: 0 8px 0 9px; padding-left: 4px; }
.arrows { margin: -3px 0 0 20px; }
.in { margin: 0 12px 0 auto; }
.ptable { margin-left: 6px; width: 641px; height: 405px; border: 1px solid #828790; display: grid; grid-template: 31px 1fr 20px / 617px 1fr; }
.phead { background: #fff; display: flex; }
.phead > div { display: flex; align-items: center; }
.c1 { width: 255px; flex: none; } .c2 { width: 101px; flex: none; } .c3 { flex: 1; overflow: hidden; }
.phead .t { padding-top: 1px; }
.phead .c1 { padding-left: 5px; border-right: 1px solid #e2e2e2; }
.phead .c2 { padding-left: 4px; border-right: 1px solid #e2e2e2; }
.phead .c3 { padding-left: 4px; }
.clip { width: 62px; overflow: hidden; margin-right: 2px; height: 22px; }
.pbody { grid-row: 2; grid-column: 1; overflow: hidden; background: #fff; height: 351px; }
.prow { height: 22.500px; display: flex; margin-left: 1px; }
.prow:nth-child(even) { background: #e8e7e3; }
.prow > div { display: flex; align-items: center; }
.prow .c1 { padding-left: 53px; position: relative; }
.prow .c2 { padding-left: 3px; } .prow .c3 { padding-left: 2px; }
.prow.head .c1 { padding-left: 7px; } .prow.sub .c1 { padding-left: 33px; } .prow.agg .c1 { padding-left: 32px; }
.prow .t { padding-top: 1px; }
.head, .sub, .agg { font-weight: 700; color: #000; }
.sub .t { margin-left: 10px; }
.hic { fill: none; stroke: #333; stroke-width: 1.3; margin: 0 7px 0 8px; }
.aic { margin: 0 8px 0 11px; }
.info { position: absolute; left: 235px; top: 1px; }
.link { color: #2579c4; text-decoration: underline; text-underline-offset: 2px; }
.vbar { grid-row: 1 / 3; grid-column: 2; }
.vbar::before { content: ""; display: block; height: 22px; border-bottom: 1px solid #111; }
.vbar i { display: block; width: 6px; height: 220px; margin-left: 8px; background: #868686; }
.hbar { grid-row: 3; grid-column: 1 / 3; padding: 7px 0 0 22px; }
.hbar i { display: block; width: 491px; height: 6px; background: #868686; }
.filterrow { display: flex; align-items: center; padding: 8px 0 0 7px; }
.edit { background: #fff; border: 1px solid #e6e6e6; border-bottom-color: #808080; height: 26px; display: flex; align-items: center; flex: none; padding-right: 6px; }
.right .edit { width: 482px; padding-left: 10px; }
.ph { color: #8a8a8a; margin-left: 5px; }
.filterrow > .t { margin: 0 9px 0 7px; padding-top: 1px; }
.any { width: 103px; padding: 0 6px 0 4px; }

.bottom { height: 328px; flex: none; border-top: 1px solid #9c9c9c; }
.logtab { width: 39px; background: #e3e3e3; padding: 3px 0 0 3px; }
.tv { width: 113px; margin-left: 1px; padding-left: 11px; }
.bottom .docktools { margin-right: 8px; }
.pickrow { display: flex; padding: 12px 0 0 4px; align-items: center; }
.pickrow .edit { width: 1773px; padding-left: 5px; }
.btn { width: 92px; height: 28px; border: 1px solid #d0d0d0; border-radius: 4px; background: #fdfdfd; margin-left: 9px; display: flex; align-items: center; justify-content: center; padding-top: 1px; }
.ttabs { height: 38px; display: flex; align-items: flex-end; padding-left: 3px; width: 1878px; }
.tt { display: flex; align-items: center; justify-content: space-between; }
.one { width: 123px; height: 26px; border: 1px solid #e2e2e2; border-bottom-color: #9c9c9c; padding: 1px 12px 0 14px; }
.two { width: 220px; height: 29px; background: #fafafa; border: 1px solid #e2e2e2; border-bottom: 0; padding: 1px 12px 0 15px; }
.rest { flex: 1; border-bottom: 1px solid #9c9c9c; }
.grid { margin: 8px 0 0 3px; width: 1875px; height: 165px; border: 1px solid #828790; display: grid; grid-template: 142px 1fr / 1852px 1fr; }
.gmain { overflow: hidden; }
.gr { display: flex; height: 30px; background: #0078d7; color: #fff; margin-left: 1px; width: 1851px; }
.gr.first { background: #1094ff; }
.gh { background: #fff; color: #000; font-weight: 700; }
.rn { width: 36px; flex: none; padding: 6px 0 0 4px; background: #b9dcf4; color: #000; font-weight: 700; }
.gh .rn { background: #fff; border-right: 1px solid #e2e2e2; }
.gc { flex: none; border-right: 1px solid #cfe3f3; border-bottom: 1px solid #cfe3f3; padding: 5px 0 0 4px; overflow: hidden; }
.gh .gc { border-right-color: #e0e0e0; border-bottom: 0; padding: 6px 0 0 5px; }
.gc:last-child { border-right: 0; }
.gc.miss { padding-left: 5px; color: #6784a0; }
.first .gc.miss { color: #fff; }
.gv { padding: 22px 0 0 8px; border-bottom: 1px solid #fff; }
.gv i { display: block; width: 6px; height: 22px; background: #868686; }
.ghs { grid-column: 1 / 3; border-top: 1px solid #fff; padding: 7px 0 0 22px; display: flex; }
.ghs i { width: 657px; height: 6px; background: #868686; }
.ghs b { width: 1px; background: #fff; margin: -7px 0 0 1151px; }
.searchrow { display: flex; align-items: center; padding: 8px 13px 0 4px; }
.searchrow .edit { width: 452px; padding-left: 10px; }
.searchrow > .t { margin: 0 9px; padding-top: 1px; }
.anyc { width: 452px; padding: 0 6px 0 3px; }
.searchrow > .count { margin: 0 0 0 auto; }

.status { height: 31px; display: flex; align-items: center; }
.st { height: 28px; border-right: 1px solid #cfcfcf; padding-top: 4px; flex: none; }
.sx { width: 831px; padding-left: 811px; }
.sd { width: 67px; padding-left: 5px; }
.sy { width: 28px; padding-left: 9px; }
.sd2 { width: 67px; padding-left: 6px; }
.crs { width: 812px; margin-left: 5px; padding: 0 6px 0 4px; }
.crs .t { padding-top: 0; }
.unit { width: 55px; border-left: 1px solid #cfcfcf; margin-left: 2px; padding-left: 6px; }
.grip { margin: 14px 0 0 8px; }
</style>
